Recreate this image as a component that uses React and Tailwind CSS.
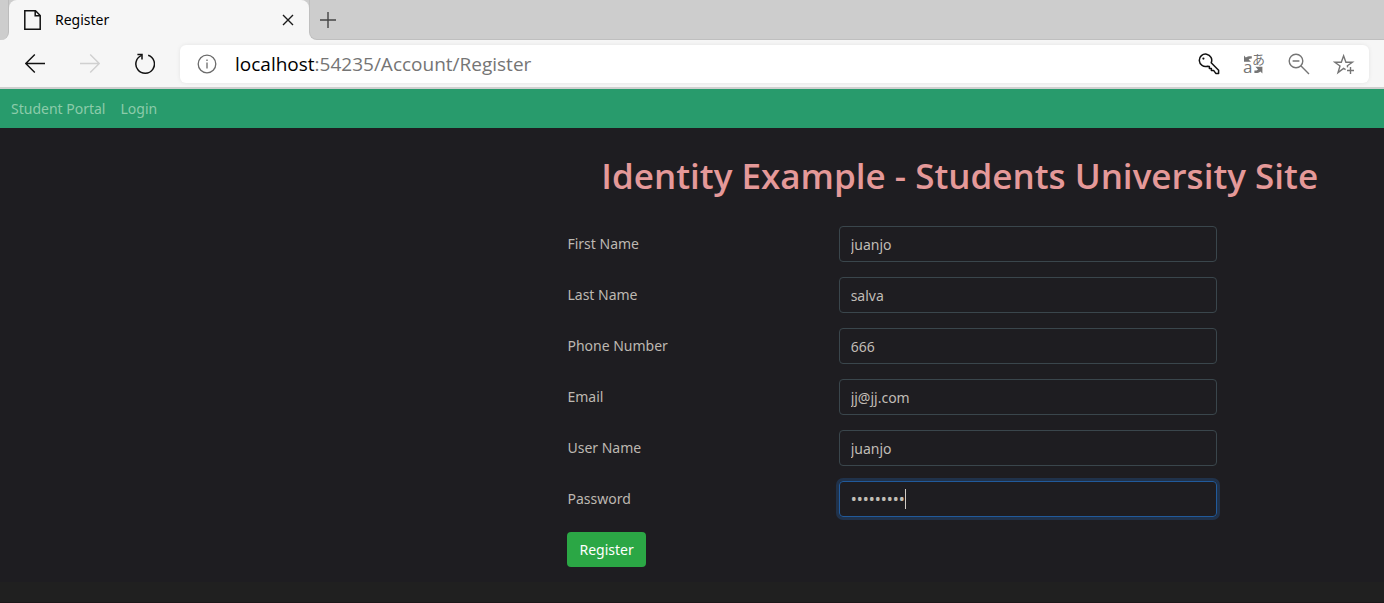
import React from "react";

function PageIcon() {
  return (
    <svg width="17" height="20" viewBox="0 0 17 20" fill="none" stroke="#111" strokeWidth="1.5" aria-hidden="true">
      <path d="M.8.8H11.5L16.2 5.5V19.2H.8Z" />
      <path d="M11.2 1V5.8H16" />
    </svg>
  );
}

function CloseIcon() {
  return (
    <svg width="12" height="12" viewBox="0 0 12 12" fill="none" stroke="#1a1a1a" strokeWidth="1.4" aria-hidden="true">
      <path d="M1 1 11 11M11 1 1 11" />
    </svg>
  );
}

function PlusIcon() {
  return (
    <svg width="16" height="16" viewBox="0 0 16 16" fill="none" stroke="#444" strokeWidth="1.4" aria-hidden="true">
      <path d="M8 0V16M0 8H16" />
    </svg>
  );
}

function BackIcon() {
  return (
    <svg width="20" height="20" viewBox="0 0 20 20" fill="none" stroke="#111" strokeWidth="1.4" aria-hidden="true">
      <path d="M20 9.5H.8M9.8.6.8 9.5 9.8 18.4" />
    </svg>
  );
}

function ForwardIcon() {
  return (
    <svg width="20" height="20" viewBox="0 0 20 20" fill="none" stroke="#d0d0d0" strokeWidth="1.4" aria-hidden="true">
      <path d="M0 9.5H19.2M10.2.6 19.2 9.5 10.2 18.4" />
    </svg>
  );
}

function ReloadIcon() {
  return (
    <svg width="20" height="22" viewBox="1 0 20 22" fill="none" stroke="#111" strokeWidth="1.5" aria-hidden="true">
      <path d="M14.2 2.2A9.3 9.3 0 1 1 7.6 2.4" />
      <path d="M3.4 1.6H8V6.4" />
    </svg>
  );
}

function InfoIcon() {
  return (
    <svg width="20" height="20" viewBox="0 0 20 20" fill="none" stroke="#6b6b6b" strokeWidth="1.3" aria-hidden="true">
      <circle cx="10" cy="10" r="8.8" />
      <path d="M10 8.6V14.4M10 5.6V7" />
    </svg>
  );
}

function KeyIcon() {
  return (
    <svg width="22" height="22" viewBox="0 0 22 22" fill="none" stroke="#111" strokeWidth="1.5" strokeLinejoin="round" aria-hidden="true">
      <path d="M13.2 9.8A6.2 6.2 0 1 0 9.4 13.2L11.4 13.6V15.4H13.4V17.4H15.6L17.8 20.4H20.6V17.2Z" />
      <circle cx="5.4" cy="5.6" r="1.1" fill="#111" stroke="none" />
    </svg>
  );
}

function TranslateIcon() {
  return (
    <svg className="overflow-visible" width="22" height="22" viewBox="0 0 22 22" fill="#757575" aria-hidden="true">
      <path d="M1 2.6 2.8 4.4C4.4 3.2 6.4 3 8.8 3.2V5.6C7.4 5.5 6.4 5.8 5.6 6.4L8 8.8H1Z" />
      <path d="M19.4 20.4 17.4 18.6C15.8 20 13.8 20.2 11.4 20V17.6C13 17.6 14.2 17.2 15 16.4L12.4 13.8H19.4Z" />
      <text x="9" y="11" fontSize="13" fontFamily="'Noto Sans CJK JP', sans-serif">あ</text>
      <text x="0" y="20.4" fontSize="17" fontFamily="'Open Sans', sans-serif">a</text>
    </svg>
  );
}

function ZoomOutIcon() {
  return (
    <svg width="22" height="22" viewBox="0 0 22 22" fill="none" stroke="#757575" strokeWidth="1.4" aria-hidden="true">
      <circle cx="8" cy="8" r="6.8" />
      <path d="M4.6 8H11.4M12.8 12.8 21 21" />
    </svg>
  );
}

function StarAddIcon() {
  return (
    <svg width="22" height="22" viewBox="0 0 22 22" fill="none" stroke="#757575" strokeWidth="1.4" aria-hidden="true">
      <path d="M12.6 16.6 10.6 15.4 5 19.6 7 13 1.8 9.2H8.3L10.6 2.8 12.9 9.2H19.4L14.4 12.8 14.6 14.4" />
      <path d="M17.5 14V21M14 17.5H21" />
    </svg>
  );
}

function BrowserChrome() {
  return (
    <header className="border-b-2 border-[#cfcfcf] bg-[#f6f6f6]">
      <div className="flex h-10 items-stretch bg-[#cdcdcd]">
        <div className="w-[9px] shrink-0 bg-[#f6f6f6]">
          <div className="h-full rounded-br-lg border-r border-[#bcbcbc] bg-[#cdcdcd]" />
        </div>
        <div className="flex w-[300px] items-center rounded-t-lg bg-[#f6f6f6] px-[15px]">
          <PageIcon />
          <span className="ml-3.5 flex-1 text-[14px] leading-5 text-black">Register</span>
          <button type="button" aria-label="Close tab" className="leading-none">
            <CloseIcon />
          </button>
        </div>
        <div className="flex flex-1 bg-[#f6f6f6]">
          <div className="flex flex-1 items-center rounded-bl-lg border-b border-l border-[#bfbfbf] bg-[#cdcdcd] pl-2.5">
            <button type="button" aria-label="New tab">
              <PlusIcon />
            </button>
          </div>
        </div>
      </div>
      <div className="flex h-[47px] items-center pr-[15px] pl-[25px]">
        <nav aria-label="History" className="flex items-center gap-[35px]">
          <button type="button" aria-label="Back"><BackIcon /></button>
          <button type="button" aria-label="Forward" disabled><ForwardIcon /></button>
          <button type="button" aria-label="Reload"><ReloadIcon /></button>
        </nav>
        <div className="ml-[25px] flex h-[38px] flex-1 items-center rounded-md bg-white pr-3.5 pl-[17px] shadow-[0_0_4px_rgba(0,0,0,0.08)]">
          <InfoIcon />
          <span className="ml-[18px] flex-1 font-['Open_Sans','Noto_Sans',sans-serif] text-[19px] leading-7 text-[#757575]">
            <span className="text-black">localhost</span>:54235/Account/Register
          </span>
          <div className="flex items-center gap-[23px]">
            <button type="button" aria-label="Saved passwords"><KeyIcon /></button>
            <button type="button" aria-label="Translate"><TranslateIcon /></button>
            <button type="button" aria-label="Zoom out"><ZoomOutIcon /></button>
            <button type="button" aria-label="Add to favorites"><StarAddIcon /></button>
          </div>
        </div>
      </div>
    </header>
  );
}

const fields = [
  { id: "firstName", label: "First Name", type: "text", value: "juanjo" },
  { id: "lastName", label: "Last Name", type: "text", value: "salva" },
  { id: "phone", label: "Phone Number", type: "tel", value: "666" },
  { id: "email", label: "Email", type: "email", value: "jj@jj.com" },
  { id: "userName", label: "User Name", type: "text", value: "juanjo" },
  { id: "password", label: "Password", type: "password", value: "juanjo666", active: true },
];

function Field({ id, label, type, value, active }) {
  return (
    <div className="grid grid-cols-[271fr_378fr_135fr] items-center">
      <label htmlFor={id} className="text-[14px] leading-5 text-[#bdb8b1]">{label}</label>
      <div className="relative">
        <input
          id={id}
          name={id}
          type={type}
          defaultValue={value}
          className={
            active
              ? "block h-9 w-full rounded border border-[#215a9b] bg-transparent px-[11px] text-[16px] text-[#c0bcb6] shadow-[0_0_0_3px_#20324b] outline-none"
              : "block h-9 w-full rounded border border-[#3a464c] bg-transparent px-[11px] text-[14px] text-[#c0bcb6] outline-none"
          }
        />
        {active && <span className="absolute top-2 left-[66px] h-5 w-px bg-[#d0ccc6]" />}
      </div>
    </div>
  );
}

export default function App() {
  return (
    <div className="flex min-h-screen flex-col bg-[#1e1d21] font-['Noto_Sans','Open_Sans',sans-serif]">
      <BrowserChrome />
      <nav aria-label="Main" className="flex h-[39px] items-center gap-[15px] bg-[#289b6c] pl-[11px] text-[14px] leading-5 text-[#8ccbaa]">
        <a href="#portal">Student Portal</a>
        <a href="#login">Login</a>
      </nav>
      <main className="flex-1 pt-6 pr-8 pl-[41%]">
        <h1 className="text-center font-['Open_Sans','Noto_Sans',sans-serif] text-[35px] leading-[48px] font-semibold whitespace-nowrap text-[#e59999]">
          Identity Example - Students University Site
        </h1>
        <form className="mt-[26px] flex flex-col gap-[15px]" onSubmit={(e) => e.preventDefault()}>
          {fields.map((f) => (
            <Field key={f.id} {...f} />
          ))}
          <button type="submit" className="h-[35px] self-start rounded bg-[#2ba745] px-3 text-[14px] leading-5 text-white">
            Register
          </button>
        </form>
      </main>
      <footer className="h-[21px] border-b border-[#1b1719] bg-[#202020]" />
    </div>
  );
}
